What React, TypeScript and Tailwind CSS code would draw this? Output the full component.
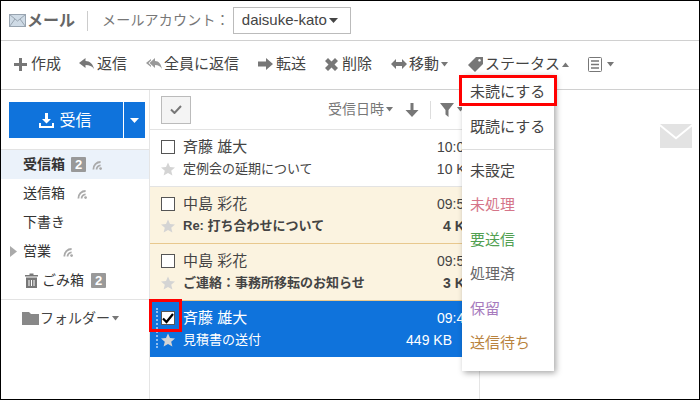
import React from "react";

const Caret = ({ up = false, c = "#777" }: { up?: boolean; c?: string }) => (
  <svg width="7" height="5" viewBox="0 0 7 5" className="ml-[2px] shrink-0">
    <path d={up ? "M0 5L3.5 0.5L7 5Z" : "M0 0H7L3.5 4.5Z"} fill={c} />
  </svg>
);

const Feed = () => (
  <svg width="10" height="10" viewBox="0 0 10 10" className="shrink-0">
    <circle cx="8.6" cy="8.6" r="1.4" fill="#aaa" />
    <path d="M4.6 9.5A4 4 0 0 1 8.6 5.300M1.400 9.500A7.200 7.200 0 0 1 8.600 2" fill="none" stroke="#aaa" strokeWidth="1.800" />
  </svg>
);

const Star = ({ c = "#d4d4d4" }: { c?: string }) => (
  <svg width="14" height="14" viewBox="0 0 14 14" className="shrink-0">
    <path d="M7 0.5L9 5.1L14 5.5L10.2 8.8L11.4 13.6L7 11L2.6 13.6L3.8 8.8L0 5.5L5 5.1Z" fill={c} />
  </svg>
);

const Tool = ({
  icon, label, caret, up, slot, className,
}: { icon: React.ReactNode; label: string; caret?: boolean; up?: boolean; slot: string; className?: string }) => (
  <div className={`flex items-center text-[15px] text-[#444] whitespace-nowrap ${className ?? ""}`}>
    <span className={`flex items-center h-[14px] shrink-0 ${slot}`}>{icon}</span>
    <span>{label}</span>
    {caret && <Caret up={up} />}
  </div>
);

const G = "#777";

const Badge = () => (
  <span className="w-[15px] h-[15px] bg-[#999] text-white text-[13px] font-bold flex items-center justify-center rounded-[1px] leading-none">2</span>
);

const Row = ({
  name, subject, time, size, bg, line, bold,
}: { name: string; subject: string; time: string; size: string; bg: string; line: string; bold?: boolean }) => (
  <div className={`h-[57px] ${bg} border-b ${line} pl-[11px] pt-[6px] text-[#444] shrink-0`}>
    <div className="flex items-center h-[22px]">
      <span className="w-[14px] h-[14px] border border-[#555] bg-white shrink-0" />
      <span className="ml-[8px] text-[15px] whitespace-nowrap">{name}</span>
      <span className="ml-auto mr-[7px] text-[14px] whitespace-nowrap">{time}</span>
    </div>
    <div className="flex items-center h-[20px] mt-[1px]">
      <Star />
      <span className={`ml-[8px] text-[13px] whitespace-nowrap ${bold ? "font-bold" : ""}`}>{subject}</span>
      <span className={`ml-auto mr-[4px] text-[14px] whitespace-nowrap ${bold ? "font-bold" : ""}`}>{size}</span>
    </div>
  </div>
);

const Nav = ({ children, active }: { children: React.ReactNode; active?: boolean }) => (
  <div className={`h-[29px] flex items-center gap-[6px] pl-[22px] text-[14px] text-[#333] ${active ? "bg-[#ebf2fa]" : ""}`}>{children}</div>
);

export default function App() {
  return (
    <div
      className="relative w-[700px] h-[400px] bg-white border border-black overflow-hidden flex flex-col"
      style={{ fontFamily: '"Liberation Sans","Noto Sans CJK JP",sans-serif' }}
    >
      {/* Header */}
      <div className="h-[40px] shrink-0 border-b border-[#d0d0d0] flex items-center pl-[8px]">
        <svg width="17" height="13" viewBox="0 0 17 13" className="shrink-0">
          <rect x="0.5" y="0.5" width="16" height="12" fill="#cfdbe6" stroke="#98a4b0" />
          <path d="M0.5 0.5L8.5 7L16.5 0.5M0.5 12.5L6 5M16.5 12.5L11 5" fill="none" stroke="#98a4b0" />
        </svg>
        <span className="ml-[1px] text-[16px] font-bold text-[#666]">メール</span>
        <span className="ml-[12px] w-px h-[20px] bg-[#ccc]" />
        <span className="ml-[14px] text-[14px] tracking-[0.2px] text-[#777] whitespace-nowrap">メールアカウント：</span>
        <div className="ml-[3px] w-[118px] h-[27px] border border-[#bbb] flex items-center pl-[8px] text-[15px] text-[#444]">
          daisuke-kato
          <svg width="9" height="5" viewBox="0 0 9 5" className="ml-[2px]"><path d="M0 0H9L4.5 5Z" fill="#444" /></svg>
        </div>
      </div>

      {/* Toolbar */}
      <div className="h-[49px] shrink-0 border-b border-[#d0d0d0] flex items-center pl-[13px] pb-[2px]">
        <Tool slot="w-[17px]" label="作成" icon={<svg width="13" height="13" viewBox="0 0 13 13"><path d="M5 0H8V5H13V8H8V13H5V8H0V5H5Z" fill={G} /></svg>} />
        <Tool slot="w-[18px]" className="ml-[18px]" label="返信" icon={<svg width="15" height="12" viewBox="0 0 15 12"><path d="M6.5 0V3C11 3 14 6 15 11C13 8 10.500 7 6.500 7V10L0 5Z" fill={G} /></svg>} />
        <Tool slot="w-[18px]" className="ml-[19px]" label="全員に返信" icon={<svg width="16" height="12" viewBox="0 0 16 12"><path d="M5 1L0 5L5 9V7.500L2.500 5L5 2.500Z M9 0V3C13 3 15 6 16 11C14 8 12.500 7 9 7V10L3.500 5Z" fill="#999" /></svg>} />
        <Tool slot="w-[18px]" className="ml-[19px]" label="転送" icon={<svg width="15" height="12" viewBox="0 0 15 12"><path d="M0 3.500H8V0L15 6L8 12V8.500H0Z" fill={G} /></svg>} />
        <Tool slot="w-[17px]" className="ml-[19px]" label="削除" icon={<svg width="13" height="13" viewBox="0 0 13 13"><path d="M3 0L6.500 3.500L10 0L13 3L9.500 6.500L13 10L10 13L6.500 9.500L3 13L0 10L3.500 6.500L0 3Z" fill={G} /></svg>} />
        <Tool slot="w-[18px]" className="ml-[19px]" label="移動" caret icon={<svg width="16" height="10" viewBox="0 0 16 10"><path d="M0 5L5 0V3H11V0L16 5L11 10V7H5V10Z" fill={G} /></svg>} />
        <Tool slot="w-[17px]" className="ml-[20px]" label="ステータス" caret up icon={<svg width="15" height="15" viewBox="0 0 15 15"><path d="M8 0H15V7L7 15L0 8ZM11.500 2A1.300 1.300 0 1 0 11.510 2Z" fill={G} fillRule="evenodd" /></svg>} />
        <div className="flex items-center ml-[19px]">
          <svg width="14" height="15" viewBox="0 0 14 15"><rect x="0.500" y="0.500" width="13" height="14" rx="1" fill="none" stroke={G} /><path d="M3 4H11M3 7.500H11M3 11H11" stroke={G} strokeWidth="1.500" /></svg>
          <span className="ml-[3px]"><Caret /></span>
        </div>
      </div>

      {/* Body */}
      <div className="flex flex-1 min-h-0">
        {/* Sidebar */}
        <div className="w-[149px] shrink-0 border-r border-[#e5e5e5]">
          <div className="mt-[12px] ml-[8px] flex w-[136px] h-[36px] bg-[#0f73dc] text-white">
            <div className="flex-1 border-r border-white flex items-center justify-center gap-[5px] text-[16px] pr-[1px]">
              <svg width="15" height="15" viewBox="0 0 15 15"><path d="M6 0H9V6H12L7.500 10.500L3 6H6Z M0 10H2V13H13V10H15V15H0Z" fill="#fff" /></svg>
              <span className="pt-[1px]">受信</span>
            </div>
            <div className="w-[21px] flex items-center justify-center">
              <svg width="9" height="5" viewBox="0 0 9 5"><path d="M0 0H9L4.500 5Z" fill="#fff" /></svg>
            </div>
          </div>
          <div className="mt-[11px] border-t border-[#e3e3e3]">
            <Nav active><span className="font-bold">受信箱</span><Badge /><Feed /></Nav>
            <Nav><span>送信箱</span><span className="w-[0px]" /><Feed /></Nav>
            <Nav>下書き</Nav>
            <div className="relative">
              <svg width="7" height="11" viewBox="0 0 7 11" className="absolute left-[9px] top-[9px]"><path d="M0 0L7 5.500L0 11Z" fill="#aaa" /></svg>
              <Nav><span>営業</span><span className="w-[0px]" /><Feed /></Nav>
            </div>
            <Nav>
              <span className="flex items-center gap-[4px] pl-[2px]">
                <svg width="13" height="15" viewBox="0 0 13 15"><path d="M0 2H4.500V0.500H8.500V2H13V3.500H0ZM1 4.500H12V15H1Z" fill={G} /><path d="M4 7V13M6.500 7V13M9 7V13" stroke="#fff" /></svg>
                ごみ箱
              </span>
              <span className="ml-[1px]"><Badge /></span>
            </Nav>
          </div>
          <div className="mt-[4px] border-t border-[#e3e3e3] h-[36px] pt-[2px] pl-[21px] flex items-center text-[14px] text-[#444]">
            <svg width="17" height="13" viewBox="0 0 17 13" className="shrink-0"><path d="M0 0H7L9 2H17V13H0Z" fill="#888" /></svg>
            <span className="ml-[1px]">フォルダー</span>
            <Caret />
          </div>
        </div>

        {/* List */}
        <div className="w-[330px] shrink-0 border-r border-[#e5e5e5] flex flex-col">
          <div className="h-[40px] shrink-0 border-b border-[#e3e3e3] flex items-center pl-[11px] pr-[15px]">
            <div className="w-[30px] h-[28px] border border-[#bbb] bg-[#f4f4f4] flex items-center justify-center">
              <svg width="12" height="9" viewBox="0 0 12 9"><path d="M1 4.500L4.500 8L11 1" fill="none" stroke={G} strokeWidth="2" /></svg>
            </div>
            <span className="ml-auto text-[14px] text-[#777]">受信日時</span>
            <Caret />
            <svg width="14" height="14" viewBox="0 0 14 14" className="ml-[12px]"><path d="M5.500 0H8.500V7H13.500L7 14L0.500 7H5.500Z" fill={G} /></svg>
            <span className="ml-[11px] w-px h-[18px] bg-[#ddd]" />
            <svg width="14" height="14" viewBox="0 0 14 14" className="ml-[9px]"><path d="M0 0H14L8.500 7V14L5.500 11.500V7Z" fill={G} /></svg>
            <span className="ml-[1px]"><Caret /></span>
          </div>
          <Row name="斉藤 雄大" subject="定例会の延期について" time="10:05" size="10 KB" bg="bg-white" line="border-[#e3e3e3]" />
          <Row name="中島 彩花" subject="Re: 打ち合わせについて" time="09:55" size="4 KB" bg="bg-[#fbf3e0]" line="border-[#e8c88e]" bold />
          <Row name="中島 彩花" subject="ご連絡：事務所移転のお知らせ" time="09:50" size="3 KB" bg="bg-[#fbf3e0]" line="border-[#e8c88e]" bold />
          <div className="relative h-[56px] shrink-0 bg-[#0f73dc] pl-[11px] pt-[6px] text-white">
            <span className="absolute left-[6px] top-[7px] h-[40px] border-l-2 border-dotted border-[#8fbdf0]" />
            <div className="flex items-center h-[22px]">
              <span className="w-[14px] h-[14px] border border-[#555] bg-white shrink-0 flex items-center justify-center">
                <svg width="12" height="11" viewBox="0 0 12 11"><path d="M1 5.500L4.500 9L11 1" fill="none" stroke="#000" strokeWidth="2.200" /></svg>
              </span>
              <span className="ml-[8px] text-[15px] whitespace-nowrap">斉藤 雄大</span>
              <span className="ml-auto mr-[7px] text-[14px]">09:45</span>
            </div>
            <div className="flex items-center h-[20px] mt-[1px]">
              <Star />
              <span className="ml-[8px] text-[13px] whitespace-nowrap">見積書の送付</span>
              <span className="ml-auto mr-[27px] text-[14px] whitespace-nowrap">449 KB</span>
            </div>
          </div>
        </div>

        {/* Preview */}
        <div className="flex-1 flex justify-end pt-[34px] pr-[7px]">
          <svg width="32" height="24" viewBox="0 0 32 24">
            <path d="M0 0H32L16 13Z" fill="#e3e3e3" />
            <path d="M0 2.500L16 15.500L32 2.500V24H0Z" fill="#e3e3e3" />
          </svg>
        </div>
      </div>

      {/* Red highlight on the checkbox */}
      <div className="absolute left-[148px] top-[298px] w-[33px] h-[33px] border-[3px] border-[#f00]" />

      {/* Status menu */}
      <div className="absolute left-[461px] top-[74px] w-[92px] h-[296px] bg-white shadow-[2px_2px_6px_rgba(0,0,0,0.35)] text-[15px] text-[#444]">
        <div className="h-[35px] flex items-center pl-[8px]">未読にする</div>
        <div className="h-[35px] flex items-center pl-[8px]">既読にする</div>
        <div className="h-px bg-[#ddd] mt-[4px]" />
        <div className="flex flex-col gap-[14.5px] pt-[11px] pl-[8px]">
          <div className="h-[20px] flex items-center">未設定</div>
          <div className="h-[20px] flex items-center text-[#d57589]">未処理</div>
          <div className="h-[20px] flex items-center text-[#52a052]">要送信</div>
          <div className="h-[20px] flex items-center text-[#666]">処理済</div>
          <div className="h-[20px] flex items-center text-[#a77bbd]">保留</div>
          <div className="h-[20px] flex items-center text-[#b9833e]">送信待ち</div>
        </div>
      </div>
      <div className="absolute left-[458px] top-[74px] w-[98px] h-[31px] border-[3px] border-[#f00]" />
    </div>
  );
}
